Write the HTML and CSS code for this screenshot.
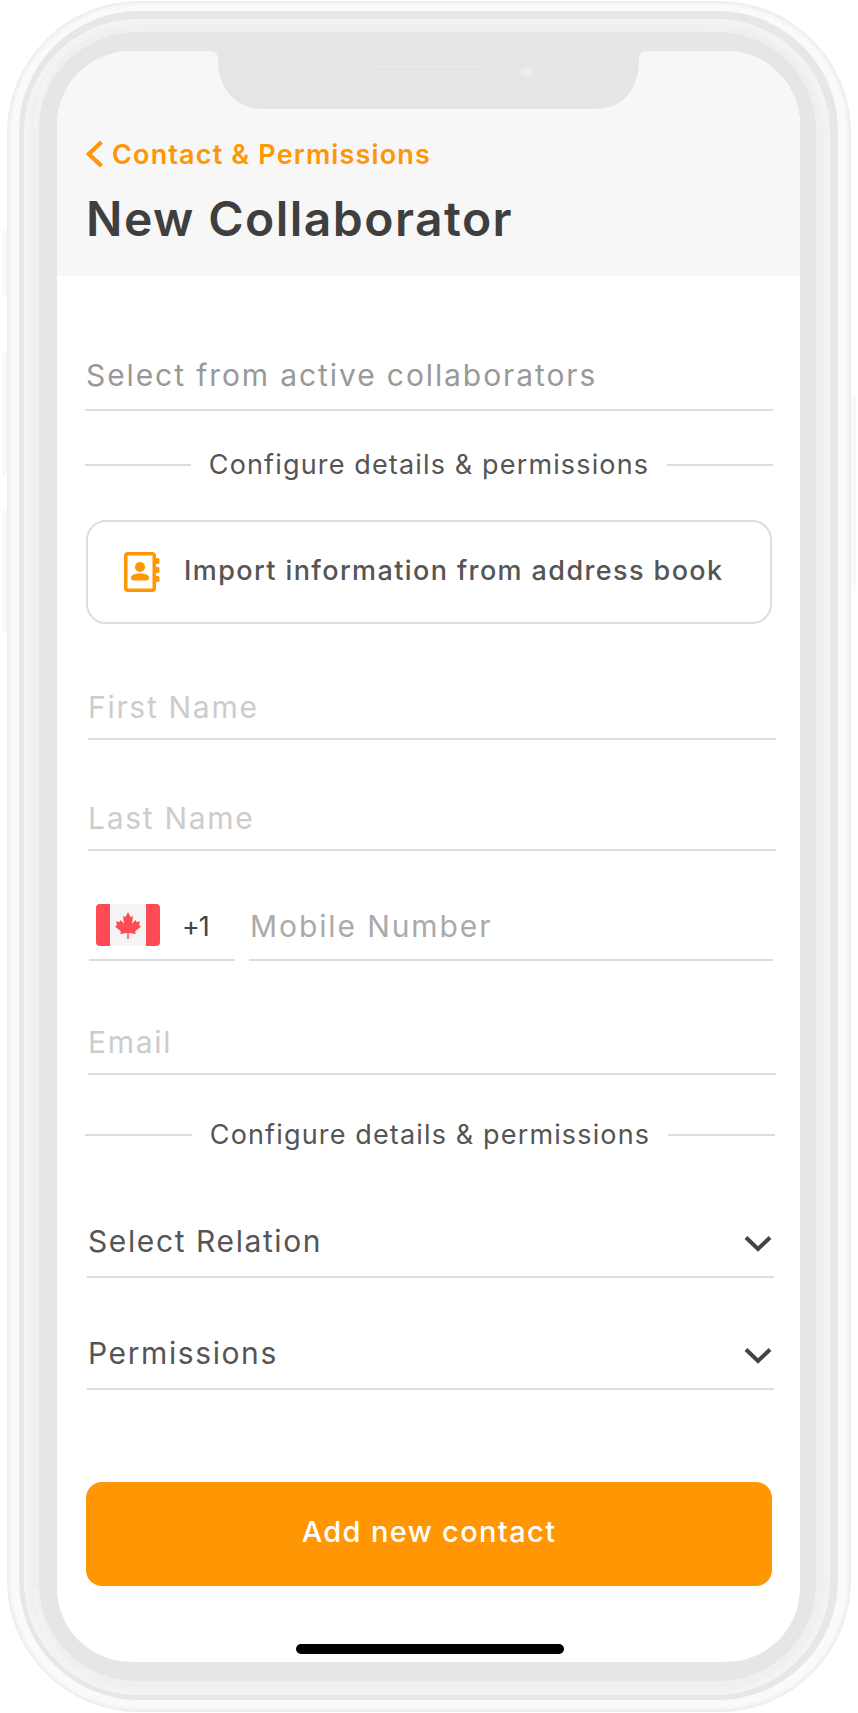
FILE: index.html
```html
<!DOCTYPE html>
<html lang="en">
<head>
<meta charset="utf-8">
<title>New Collaborator</title>
<link rel="stylesheet" href="styles.css">
</head>
<body>
<div class="phone">
  <span class="side side-a"></span>
  <span class="side side-b"></span>
  <span class="side side-c"></span>
  <span class="side side-d"></span>
  <div class="ring ring-2">
    <div class="ring ring-3">
      <div class="ring ring-4">
        <main class="screen">
          <svg class="notch" width="438" height="58" viewBox="0 0 438 58" aria-hidden="true">
            <path d="M0 0C5 0 8 3 8 9C8 38 26 58 52 58H386C412 58 429 38 429 9C429 3 432 0 438 0Z" fill="#e5e5e5"/>
            <rect x="163" y="15" width="112" height="2" rx="1" fill="#e9e9e9"/>
            <circle cx="317" cy="21" r="7" fill="#e9e9e9"/>
            <circle cx="317" cy="21" r="4" fill="#eeeeee"/>
          </svg>
          <header class="head">
            <div class="back">
              <svg width="18" height="28" viewBox="0 0 18 28" aria-hidden="true"><path d="M15.500 2L2.800 14L15.500 26" fill="none" stroke="#ff9603" stroke-width="4.200"/></svg>
              <span class="back-label">Contact &amp; Permissions</span>
            </div>
            <h1 class="title">New Collaborator</h1>
          </header>
          <div class="select-active"><span class="active-text">Select from active collaborators</span></div>
          <div class="divider"><span class="divider-text">Configure details &amp; permissions</span></div>
          <button class="import" type="button">
            <svg width="36" height="40" viewBox="0 0 36 40" aria-hidden="true">
              <rect x="1.750" y="1.750" width="28.500" height="36.500" rx="2" fill="none" stroke="#ff9603" stroke-width="3.500"/>
              <path d="M32 6h2a1.500 1.500 0 0 1 1.500 1.500v3A1.500 1.500 0 0 1 34 12h-2zM32 15h2a1.500 1.500 0 0 1 1.500 1.500v3A1.500 1.500 0 0 1 34 21h-2zM32 24h2a1.500 1.500 0 0 1 1.500 1.500v3A1.500 1.500 0 0 1 34 30h-2z" fill="#ff9603"/>
              <circle cx="16" cy="15" r="5" fill="#ff9603"/>
              <path d="M7 26c0-3 3-4.500 9-4.500s9 1.500 9 4.500c0 1.500-1 2.500-2.500 2.500h-13C8 28.500 7 27.500 7 26z" fill="#ff9603"/>
            </svg>
            <span class="import-text">Import information from address book</span>
          </button>
          <div class="field field-first"><span class="hint">First Name</span></div>
          <div class="field field-last"><span class="hint">Last Name</span></div>
          <div class="phone-row">
            <div class="code">
              <svg class="flag" width="64" height="42" viewBox="0 0 64 42" aria-hidden="true">
                <rect width="64" height="42" rx="4" fill="#f5f5f5"/>
                <path d="M4 0H14V42H4A4 4 0 0 1 0 38V4A4 4 0 0 1 4 0ZM50 0H60A4 4 0 0 1 64 4V38A4 4 0 0 1 60 42H50Z" fill="#ff4b55"/>
                <path d="M32 8L34.500 13L37 12L36 19.500L39.500 16L40.500 18L44 17.500L43 21L45 22.500L39 27.500L40 30L32.700 29V35H31.300V29L24 30L25 27.500L19 22.500L21 21L20 17.500L23.500 18L24.500 16L28 19.500L27 12L29.500 13Z" fill="#ff4b55"/>
              </svg>
              <span class="dial">+1</span>
            </div>
            <div class="mobile"><span class="mobile-text">Mobile Number</span></div>
          </div>
          <div class="field field-email"><span class="hint">Email</span></div>
          <div class="divider divider-low"><span class="divider-text">Configure details &amp; permissions</span></div>
          <div class="choice choice-relation">
            <span class="choice-text">Select Relation</span>
            <svg class="caret" width="28" height="17" viewBox="0 0 28 17" aria-hidden="true"><path d="M2 2.500L14 14L26 2.500" fill="none" stroke="#444444" stroke-width="4"/></svg>
          </div>
          <div class="choice choice-perm">
            <span class="choice-text">Permissions</span>
            <svg class="caret" width="28" height="17" viewBox="0 0 28 17" aria-hidden="true"><path d="M2 2.500L14 14L26 2.500" fill="none" stroke="#444444" stroke-width="4"/></svg>
          </div>
          <button class="submit" type="button">Add new contact</button>
          <div class="home-bar"></div>
        </main>
      </div>
    </div>
  </div>
  <svg class="gloss" width="844" height="1711" viewBox="0 0 844 1711" aria-hidden="true">
    <path d="M75 38C50 52 33 80 28 125M767 38C795 53 815 80 820 125M75 1672C50 1660 33 1630 28 1590M767 1672C795 1660 815 1630 820 1590" fill="none" stroke="#f3f3f3" stroke-width="4" stroke-linecap="round"/>
  </svg>
</div>
</body>
</html>
```
FILE: styles.css
```css
* {
  box-sizing: border-box;
}

html,
body {
  margin: 0;
  background: #ffffff;
}

body {
  width: 858px;
  height: 1713px;
  overflow: hidden;
  font-family: Inter, "Liberation Sans", sans-serif;
}

.phone {
  position: relative;
  width: 844px;
  height: 1711px;
  margin: 1px 0 0 7px;
  padding: 10px 13px 12px 12px;
  border-radius: 132px;
  background: #fafafa;
  box-shadow: inset 0 0 5px 1px #e3e3e3;
}

.side {
  position: absolute;
  width: 5px;
  background: #f9f9f9;
}

.side-a { left: -5px; top: 229px; height: 65px; }
.side-b { left: -5px; top: 352px; height: 122px; }
.side-c { left: -5px; top: 509px; height: 122px; }
.side-d { right: -5px; top: 395px; height: 195px; }

.ring {
  height: 100%;
}

.ring-2 {
  padding: 8px 8px 5px 5px;
  border-radius: 120px;
  background: #e7e7e7;
}

.ring-3 {
  padding: 13px 14px 14px 15px;
  border-radius: 114px;
  background: #efefef;
  box-shadow: inset 0 0 8px 3px #f6f6f6;
}

.ring-4 {
  padding: 19px 16px 19px 18px;
  border-radius: 98px;
  background: #e6e6e6;
}

.gloss {
  position: absolute;
  left: 0;
  top: 0;
  pointer-events: none;
}

.screen {
  position: relative;
  height: 100%;
  overflow: hidden;
  border-radius: 74px;
  background: #ffffff;
}

.notch {
  position: absolute;
  left: 153px;
  top: 0;
  display: block;
}

.head {
  height: 225px;
  padding: 88px 0 0 29px;
  background: #f7f7f7;
}

.back {
  display: flex;
  align-items: center;
  gap: 8px;
  height: 30px;
}

.back-label {
  font-size: 27px;
  font-weight: 600;
  letter-spacing: 1.15px;
  color: #ff9603;
}

.title {
  margin: 22px 0 0;
  font-size: 48px;
  line-height: 56px;
  font-weight: 600;
  letter-spacing: 1.45px;
  color: #3f3f3f;
}

.select-active {
  display: flex;
  align-items: center;
  width: 688px;
  height: 71px;
  margin: 64px 0 0 28px;
  padding-left: 1px;
  border-bottom: 2px solid #dddddd;
}

.active-text {
  font-size: 30px;
  letter-spacing: 1.9px;
  color: #999999;
}

.divider {
  display: flex;
  align-items: center;
  justify-content: center;
  gap: 18px;
  width: 688px;
  height: 30px;
  margin: 39px 0 0 28px;
}

.divider::before,
.divider::after {
  content: "";
  flex: 1;
  height: 2px;
  background: #dddddd;
}

.divider-low {
  width: 690px;
  margin-top: 45px;
}

.divider-text {
  margin-top: -2px;
  font-size: 27px;
  letter-spacing: 1.15px;
  color: #555555;
}

.import {
  display: flex;
  align-items: center;
  gap: 24px;
  width: 686px;
  height: 104px;
  margin: 40px 0 0 29px;
  padding: 0 0 0 36px;
  border: 2px solid #dddddd;
  border-radius: 20px;
  background: #ffffff;
  font-family: inherit;
}

.import-text {
  margin-top: -4px;
  font-size: 27px;
  font-weight: 500;
  letter-spacing: 1.4px;
  color: #555555;
}

.field {
  display: flex;
  align-items: center;
  width: 688px;
  height: 68px;
  margin-left: 31px;
  padding-top: 4px;
  border-bottom: 2px solid #dddddd;
}

.field-first { margin-top: 48px; }
.field-last { margin-top: 43px; }
.field-email { margin-top: 46px; }

.hint {
  font-size: 30px;
  letter-spacing: 1.7px;
  color: #cccccc;
}

.phone-row {
  display: flex;
  gap: 14px;
  width: 684px;
  height: 71px;
  margin: 39px 0 0 32px;
}

.code {
  display: flex;
  align-items: flex-start;
  width: 146px;
  padding: 14px 0 0 7px;
  border-bottom: 2px solid #dddddd;
}

.flag {
  display: block;
  flex: none;
}

.dial {
  margin: 7px 0 0 22px;
  font-size: 27px;
  line-height: 32px;
  letter-spacing: -1px;
  color: #444444;
}

.mobile {
  display: flex;
  align-items: center;
  flex: 1;
  padding: 2px 0 0 1px;
  border-bottom: 2px solid #dddddd;
}

.mobile-text {
  font-size: 30px;
  letter-spacing: 1.9px;
  color: #aaaaaa;
}

.choice {
  display: flex;
  align-items: center;
  justify-content: space-between;
  width: 687px;
  height: 68px;
  margin-left: 30px;
  padding: 0 2px 4px 1px;
  border-bottom: 2px solid #dddddd;
}

.caret {
  margin-top: 4px;
}

.choice-relation { margin-top: 60px; }
.choice-perm { margin-top: 44px; }

.choice-text {
  font-size: 30px;
  letter-spacing: 1.6px;
  color: #555555;
}

.submit {
  display: block;
  width: 686px;
  height: 104px;
  margin: 92px 0 0 29px;
  padding: 0 0 6px;
  border: 0;
  border-radius: 16px;
  background: #ff9603;
  font-family: inherit;
  font-size: 29px;
  font-weight: 500;
  letter-spacing: 1.35px;
  color: #ffffff;
}

.home-bar {
  width: 268px;
  height: 10px;
  margin: 58px 0 0 239px;
  border-radius: 5px;
  background: #000000;
}
```
